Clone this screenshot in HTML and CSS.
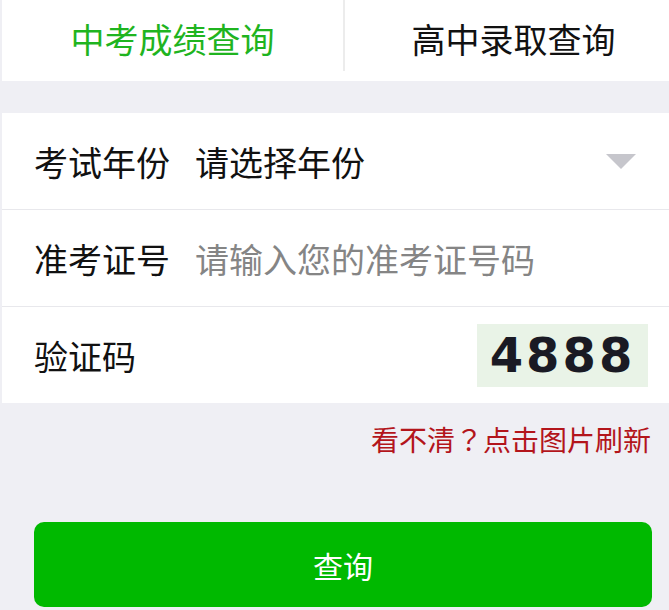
FILE: index.html
```html
<!DOCTYPE html>
<html lang="zh-CN">
<head>
  <meta charset="UTF-8">
  <meta name="viewport" content="width=device-width, initial-scale=1.0">
  <title>中考成绩查询</title>
  <link rel="stylesheet" href="styles.css">
</head>
<body>

  <!-- Tabs -->
  <div class="tabs">
    <div class="tab active">中考成绩查询</div>
    <div class="tab-divider"></div>
    <div class="tab">高中录取查询</div>
  </div>

  <!-- Form -->
  <div class="form">
    <div class="form-row">
      <span class="label">考试年份</span>
      <span class="value">请选择年份</span>
      <span class="arrow"></span>
    </div>
    <div class="form-row">
      <span class="label">准考证号</span>
      <span class="value placeholder">请输入您的准考证号码</span>
    </div>
    <div class="form-row">
      <span class="label">验证码</span>
      <span class="captcha">4888</span>
    </div>
  </div>

  <p class="hint">看不清<span class="punct" lang="zh-TW">？</span>点击图片刷新</p>

  <button class="submit-btn">查询</button>

</body>
</html>
```

FILE: styles.css
```css
:root {
  --green: #00b900;
  --tab-green: #1fb41f;
  --body-color: #efeff4;
  --line-color: #e8e8ec;
  --text-color: #111;
  --muted-color: #858585;
  --red: #b3151b;
}

body {
  margin: 0;
  padding: 0 0 0 2px;
  background-color: var(--body-color);
  font-family: "Noto Sans CJK SC", "Noto Sans", sans-serif;
  color: var(--text-color);
  overflow: hidden;
}

/* Tabs */
.tabs {
  display: flex;
  height: 81px;
  background-color: #fff;
}

.tab {
  display: flex;
  align-items: center;
  justify-content: center;
  height: 77px;
  font-size: 34px;
  color: var(--text-color);
}

.tab:first-child {
  width: 341px;
}

.tab:last-child {
  flex: 1;
  padding-left: 13px;
}

.tab.active {
  color: var(--tab-green);
}

.tab-divider {
  width: 2px;
  height: 71px;
  background-color: #ececec;
}

/* Form */
.form {
  margin-top: 32px;
  background-color: #fff;
}

.form-row {
  display: flex;
  align-items: center;
  height: 96px;
  padding: 0 21px 0 32px;
  border-bottom: 1px solid var(--line-color);
}

.form-row:last-child {
  border-bottom: none;
}

.label {
  width: 161px;
  font-size: 34px;
  flex-shrink: 0;
}

.value {
  flex: 1;
  font-size: 34px;
}

.value.placeholder {
  color: var(--muted-color);
}

.arrow {
  width: 0;
  height: 0;
  margin-right: 12px;
  border-left: 15px solid transparent;
  border-right: 15px solid transparent;
  border-top: 15px solid #c6c6cc;
}

.captcha {
  margin-left: auto;
  width: 171px;
  height: 63px;
  line-height: 63px;
  text-align: center;
  background-color: #e9f3e7;
  font-family: "DejaVu Sans", sans-serif;
  font-weight: bold;
  font-size: 48px;
  letter-spacing: 3px;
  color: #1a1a24;
}

.hint {
  margin: 0;
  padding: 16px 18px 0 0;
  line-height: 40px;
  text-align: right;
  font-size: 28px;
  color: var(--red);
}

/* centred full-width question mark */
.punct {
  font-family: "Noto Sans CJK TC", sans-serif;
}

.submit-btn {
  display: block;
  width: 618px;
  height: 85px;
  margin: 63px 0 0 32px;
  border: none;
  border-radius: 10px;
  background-color: var(--green);
  color: #fff;
  font-family: "Noto Sans CJK SC", sans-serif;
  font-size: 30px;
  cursor: pointer;
}
```
